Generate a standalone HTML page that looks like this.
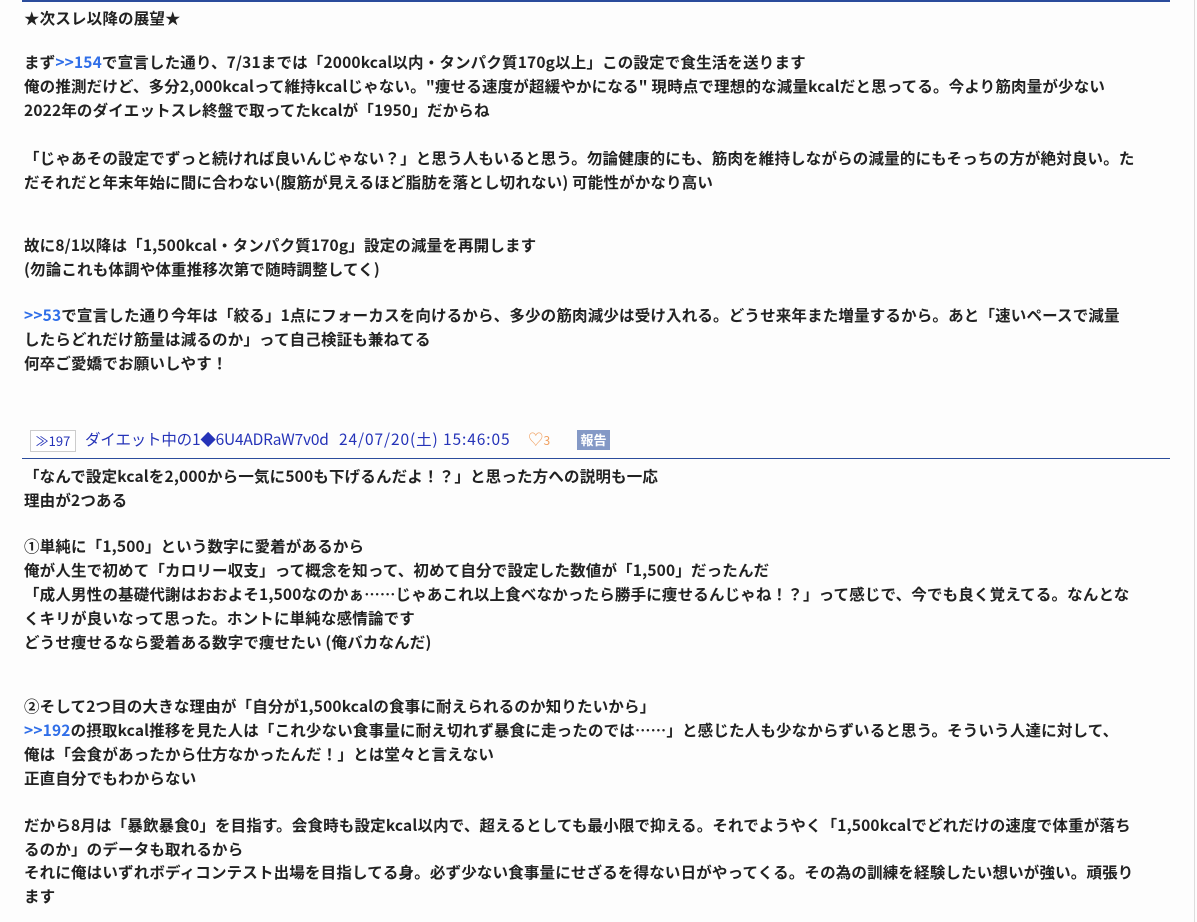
<!DOCTYPE html>
<html><head><meta charset="utf-8"><style>
body{margin:0;width:1197px;height:922px;background:#fdfdfd;overflow:hidden;position:relative;font-family:"Noto Sans CJK JP","Liberation Sans",sans-serif;}
.l{position:absolute;left:24px;font-size:15.5px;font-weight:bold;color:#222;white-space:nowrap;line-height:24px;height:24px;letter-spacing:0.17px;}
.a{color:#2f6ee8;}
.hr{position:absolute;left:22px;width:1148px;height:1px;background:#2b4c9c;}
.vr{position:absolute;left:1194px;top:0;width:1px;height:922px;background:#ddd;}
.hd{position:absolute;top:427px;font-size:15.5px;color:#2533b8;white-space:nowrap;height:24px;line-height:24px;}
.num{position:absolute;top:430px;left:30px;width:44px;height:20px;border:1px solid #ccc;line-height:20px;font-size:13px;color:#2533b8;background:#fff;text-align:center;}
.rep{position:absolute;top:430px;left:577px;width:33px;height:20px;background:#8499c6;color:#fff;font-size:13px;font-weight:bold;line-height:20px;text-align:center;}
</style></head><body>
<div class="hr" style="top:0;height:2px"></div>
<div class="vr"></div>
<div class="l" style="top:6px">★次スレ以降の展望★</div>
<div class="l" style="top:50px">まず<span class="a">&gt;&gt;154</span>で宣言した通り、7/31までは「2000kcal以内・タンパク質170g以上」この設定で食生活を送ります</div>
<div class="l" style="top:74px">俺の推測だけど、多分2,000kcalって維持kcalじゃない。"痩せる速度が超緩やかになる" 現時点で理想的な減量kcalだと思ってる。今より筋肉量が少ない</div>
<div class="l" style="top:98px">2022年のダイエットスレ終盤で取ってたkcalが「1950」だからね</div>
<div class="l" style="top:146px">「じゃあその設定でずっと続ければ良いんじゃない？」と思う人もいると思う。勿論健康的にも、筋肉を維持しながらの減量的にもそっちの方が絶対良い。た</div>
<div class="l" style="top:170px">だそれだと年末年始に間に合わない(腹筋が見えるほど脂肪を落とし切れない) 可能性がかなり高い</div>
<div class="l" style="top:233px">故に8/1以降は「1,500kcal・タンパク質170g」設定の減量を再開します</div>
<div class="l" style="top:257px">(勿論これも体調や体重推移次第で随時調整してく)</div>
<div class="l" style="top:303px"><span class="a">&gt;&gt;53</span>で宣言した通り今年は「絞る」1点にフォーカスを向けるから、多少の筋肉減少は受け入れる。どうせ来年また増量するから。あと「速いペースで減量</div>
<div class="l" style="top:327px">したらどれだけ筋量は減るのか」って自己検証も兼ねてる</div>
<div class="l" style="top:351px">何卒ご愛嬌でお願いしやす！</div>
<div class="num">≫197</div>
<div class="hd" style="left:85px;letter-spacing:-0.2px">ダイエット中の1◆6U4ADRaW7v0d</div>
<div class="hd" style="left:339px;letter-spacing:0.9px">24/07/20(土) 15:46:05</div>
<div class="hd" style="left:528px;color:#f0a060">♡<span style="font-size:12px">3</span></div>
<div class="rep">報告</div>
<div class="hr" style="top:458px"></div>
<div class="l" style="top:464px">「なんで設定kcalを2,000から一気に500も下げるんだよ！？」と思った方への説明も一応</div>
<div class="l" style="top:488px">理由が2つある</div>
<div class="l" style="top:534px">①単純に「1,500」という数字に愛着があるから</div>
<div class="l" style="top:558px">俺が人生で初めて「カロリー収支」って概念を知って、初めて自分で設定した数値が「1,500」だったんだ</div>
<div class="l" style="top:582px">「成人男性の基礎代謝はおおよそ1,500なのかぁ……じゃあこれ以上食べなかったら勝手に痩せるんじゃね！？」って感じで、今でも良く覚えてる。なんとな</div>
<div class="l" style="top:606px">くキリが良いなって思った。ホントに単純な感情論です</div>
<div class="l" style="top:630px">どうせ痩せるなら愛着ある数字で痩せたい (俺バカなんだ)</div>
<div class="l" style="top:694px">②そして2つ目の大きな理由が「自分が1,500kcalの食事に耐えられるのか知りたいから」</div>
<div class="l" style="top:718px"><span class="a">&gt;&gt;192</span>の摂取kcal推移を見た人は「これ少ない食事量に耐え切れず暴食に走ったのでは……」と感じた人も少なからずいると思う。そういう人達に対して、</div>
<div class="l" style="top:742px">俺は「会食があったから仕方なかったんだ！」とは堂々と言えない</div>
<div class="l" style="top:766px">正直自分でもわからない</div>
<div class="l" style="top:813px">だから8月は「暴飲暴食0」を目指す。会食時も設定kcal以内で、超えるとしても最小限で抑える。それでようやく「1,500kcalでどれだけの速度で体重が落ち</div>
<div class="l" style="top:837px">るのか」のデータも取れるから</div>
<div class="l" style="top:860px">それに俺はいずれボディコンテスト出場を目指してる身。必ず少ない食事量にせざるを得ない日がやってくる。その為の訓練を経験したい想いが強い。頑張り</div>
<div class="l" style="top:884px">ます</div>
</body></html>
